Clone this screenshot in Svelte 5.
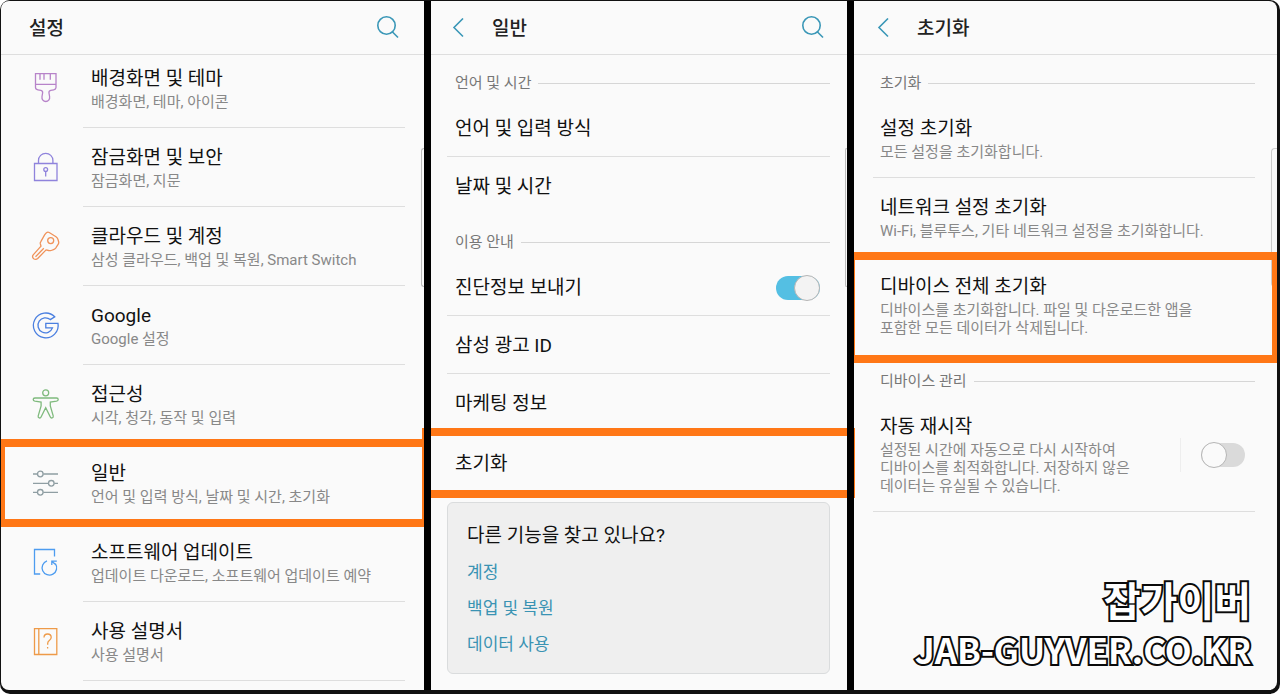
<script>
  const settings = [
    { icon: 'brush', color: '#b783c9', title: '배경화면 및 테마', note: '배경화면, 테마, 아이콘' },
    { icon: 'lock', color: '#8f83dc', title: '잠금화면 및 보안', note: '잠금화면, 지문' },
    { icon: 'key', color: '#f0935a', title: '클라우드 및 계정', note: '삼성 클라우드, 백업 및 복원, Smart Switch' },
    { icon: 'google', color: '#4a7fe0', title: 'Google', note: 'Google 설정' },
    { icon: 'person', color: '#7fba7d', title: '접근성', note: '시각, 청각, 동작 및 입력' },
    { icon: 'sliders', color: '#8f9ea3', title: '일반', note: '언어 및 입력 방식, 날짜 및 시간, 초기화', marked: true },
    { icon: 'update', color: '#4d9cf0', title: '소프트웨어 업데이트', note: '업데이트 다운로드, 소프트웨어 업데이트 예약' },
    { icon: 'manual', color: '#ee9a48', title: '사용 설명서', note: '사용 설명서' }
  ];
  const related = ['계정', '백업 및 복원', '데이터 사용'];

  let diagnostics = $state(true);
  let autoRestart = $state(false);
</script>

{#snippet search()}
  <button class="tool" aria-label="검색">
    <svg width="24" height="24" viewBox="0 0 24 24"><circle cx="10.5" cy="9.5" r="8.7" /><path d="M16 15.5l6 6" /></svg>
  </button>
{/snippet}

{#snippet back()}
  <button class="tool back" aria-label="뒤로">
    <svg width="14" height="20" viewBox="0 0 14 20"><path d="M12 .5L3 9.5l9 9" /></svg>
  </button>
{/snippet}

{#snippet glyph(name)}
  <svg width="32" height="32" viewBox="0 0 32 32" aria-hidden="true">
    {#if name === 'brush'}
      <path d="M5.5 .7H26v13.8c0 1.5-.8 2-2.3 2.3l-3 .6c-1.5.3-2 1.2-1.7 2.8l.6 3.3c.5 3-1.5 5-3.8 5s-4.3-2-3.8-5l.6-3.3c.3-1.6-.2-2.5-1.7-2.8l-3-.6c-1.5-.3-2.4-.8-2.4-2.3zM5.5 11.3H26M10 .7v6M14 .7v6M20.3 .7v6" />
    {:else if name === 'lock'}
      <path d="M4.5 11.5H27v17H4.5zM8.5 11.5V8.5a7.2 7.2 0 0 1 14.4 0v3M15.7 19.5v5" /><circle cx="15.7" cy="17.5" r="1.9" />
    {:else if name === 'key'}
      <path d="M16.2 1.9q1.5-1.2 3-.4l6.8 4.2q1.4 1 1.9 2.6l.8 2.7q.2 1.3-.6 2.4l-2.4 3.7q-.8 1-2.2 1.5l-2.3.9q-1.2.4-2.6 0l-2.5-.6-8.4 8.6q-1.8 1.7-4 .3-2-1.8-.5-4l7.8-8.6-.7-2.5q-.2-1 .4-1.9l3.9-6.9zM5.5 25.8l8.3-8.6" /><circle cx="20.7" cy="9.6" r="3" />
    {:else if name === 'google'}
      <path d="M24.7 6.8A12.4 12.4 0 1 0 28 13.3H15.8v4.6h6.7a7.5 7.5 0 1 1-2.2-8.3z" />
    {:else if name === 'person'}
      <circle cx="15.7" cy="3.8" r="3" /><path d="M5 9h21.5q1.7.1 1.7 1.5t-1.7 1.7l-6.2.8v4l2.9 9.8q.4 1.7-1 2.1-1.3.4-2-1.2l-4.5-8.9-4.5 8.9q-.7 1.6-2 1.2-1.4-.4-1-2.1l2.9-9.8v-4l-6.2-.8q-1.7-.3-1.7-1.7T5 9z" />
    {:else if name === 'sliders'}
      <path d="M3 6h4.3M13.3 6H28M3 15.3h15.3M24.3 15.3H28M3 24.3h4.3M13.3 24.3H28" /><circle cx="10.3" cy="6" r="2.8" /><circle cx="21.3" cy="15.3" r="2.8" /><circle cx="10.3" cy="24.3" r="2.8" />
    {:else if name === 'update'}
      <path d="M24.5 9.5v-7h-20V27h5.7M17 13.9a7.3 7.3 0 1 0 8.4 2.8M21.8 18v-3.8h5M22 14.4l3.6 3.2" />
    {:else}
      <path d="M4.5 2.7h22.3v25.8H4.5zM8.8 2.7v25.8M14 11.5q.1-3.5 3.6-3.5t3.6 3.2q0 2-1.9 3.4-1.6 1.2-1.6 3v1.2M17.6 21v1.6" />
    {/if}
  </svg>
{/snippet}

<main class="frame">
  <section class="panel first">
    <header><h1>설정</h1>{@render search()}</header>
    <nav>
      {#each settings as item}
        <a class="setting" class:marked={item.marked} href="#{item.icon}">
          <span class="icon" style="color: {item.color}">{@render glyph(item.icon)}</span>
          <span class="entry">
            <span class="title">{item.title}</span>
            <span class="note">{item.note}</span>
          </span>
        </a>
      {/each}
    </nav>
    <i class="edge"></i>
  </section>

  <section class="panel second">
    <header>{@render back()}<h1>일반</h1>{@render search()}</header>
    <div class="body">
      <h2>언어 및 시간</h2>
      <a class="row" href="#language">언어 및 입력 방식</a>
      <a class="row last" href="#date">날짜 및 시간</a>
      <h2>이용 안내</h2>
      <label class="row">진단정보 보내기<input type="checkbox" role="switch" bind:checked={diagnostics} /></label>
      <a class="row" href="#ad-id">삼성 광고 ID</a>
      <a class="row" href="#marketing">마케팅 정보</a>
      <a class="row last marked" href="#reset">초기화</a>
      <aside>
        <h3>다른 기능을 찾고 있나요?</h3>
        {#each related as name}
          <a href="#related">{name}</a>
        {/each}
      </aside>
    </div>
    <i class="edge"></i>
  </section>

  <section class="panel third">
    <header>{@render back()}<h1>초기화</h1></header>
    <div class="body">
      <h2>초기화</h2>
      <a class="detail" href="#settings-reset">
        <span class="title">설정 초기화</span>
        <span class="note">모든 설정을 초기화합니다.</span>
      </a>
      <a class="detail last" href="#network-reset">
        <span class="title">네트워크 설정 초기화</span>
        <span class="note">Wi-Fi, 블루투스, 기타 네트워크 설정을 초기화합니다.</span>
      </a>
      <a class="detail last marked" href="#factory-reset">
        <span class="title">디바이스 전체 초기화</span>
        <span class="note">디바이스를 초기화합니다. 파일 및 다운로드한 앱을<br />포함한 모든 데이터가 삭제됩니다.</span>
      </a>
      <h2>디바이스 관리</h2>
      <div class="detail split">
        <label for="restart">
          <span class="title">자동 재시작</span>
          <span class="note">설정된 시간에 자동으로 다시 시작하여<br />디바이스를 최적화합니다. 저장하지 않은<br />데이터는 유실될 수 있습니다.</span>
        </label>
        <span class="control"><input id="restart" type="checkbox" role="switch" bind:checked={autoRestart} /></span>
      </div>
    </div>
    <footer>
      <strong>잡가이버</strong>
      <strong class="site">JAB-GUYVER.CO.KR</strong>
    </footer>
    <i class="edge"></i>
  </section>
</main>

<style>
  :global(body) {
    margin: 0;
    background: #fff;
  }
  .frame, .frame * {
    box-sizing: border-box;
  }
  .frame {
    display: grid;
    grid-template-columns: 423fr 416fr 423fr;
    gap: 7px;
    min-height: 100vh;
    padding: 1px 3px 4px 1px;
    border-radius: 10px;
    overflow: hidden;
    background: #111;
    font-family: Roboto, 'Noto Sans CJK KR', sans-serif;
    color: #111;
  }
  .panel {
    position: relative;
    display: flex;
    flex-direction: column;
    min-width: 0;
    background: #fafafa;
  }
  .first {
    border-radius: 8px 0 0 8px;
  }
  .third {
    border-radius: 0 8px 8px 0;
  }
  /* the dark seam hides the part of a marker that runs past its panel */
  .second::before, .third::before {
    content: '';
    position: absolute;
    z-index: 3;
    top: 0;
    bottom: 0;
    left: -7px;
    width: 7px;
    background: #000;
  }
  a {
    color: inherit;
    text-decoration: none;
  }
  header {
    display: flex;
    align-items: center;
    height: 54px;
    padding: 0 22px 0 20px;
    border-bottom: 1px solid #dedede;
  }
  .first header {
    padding: 0 24px 0 28px;
  }
  .third header {
    padding-left: 22px;
  }
  h1 {
    flex: 1;
    margin: 0;
    padding-top: 2px;
    font-size: 19px;
    line-height: 24px;
    font-weight: 500;
    color: #222;
  }
  .tool {
    display: flex;
    padding: 0;
    border: 0;
    background: none;
    color: #3a97b7;
  }
  .back {
    margin-right: 27px;
  }
  svg {
    display: block;
    fill: none;
    stroke: currentColor;
    stroke-width: 1.3;
  }
  .tool svg {
    stroke-width: 1.6;
  }
  .title {
    display: block;
    font-size: 19px;
    line-height: 24px;
  }
  .note {
    display: block;
    margin-top: 2px;
    font-size: 15px;
    line-height: 18px;
    font-weight: 400;
    color: #888;
  }
  .setting {
    position: relative;
    display: flex;
    padding-right: 19px;
  }
  .icon {
    padding: 24px 20px 0 29px;
  }
  .entry {
    flex: 1;
    height: 79px;
    margin-left: 1px;
    padding: 18px 0 0 8px;
    border-bottom: 1px solid #dedede;
    white-space: nowrap;
  }
  .setting:first-child .entry {
    height: 73px;
    padding-top: 12px;
  }
  .setting:first-child .icon {
    padding-top: 18px;
  }
  .body {
    padding: 0 17px 0 16px;
  }
  .third .body {
    padding: 0 22px 0 19px;
  }
  h2 {
    display: flex;
    align-items: center;
    gap: 7px;
    height: 44px;
    margin: 0;
    padding: 12px 0 0 8px;
    font-size: 15px;
    line-height: 22px;
    font-weight: 400;
    color: #777;
  }
  .third h2 {
    padding-left: 7px;
  }
  h2::after {
    content: '';
    flex: 1;
    height: 1px;
    background: #d6d6d6;
  }
  .row {
    position: relative;
    display: flex;
    align-items: center;
    justify-content: space-between;
    height: 58px;
    padding: 2px 10px 0 8px;
    border-bottom: 1px solid #dedede;
    font-size: 19px;
    line-height: 24px;
  }
  .row.last {
    height: 57px;
    border: 0;
  }
  .row.marked {
    height: 62px;
  }
  .detail {
    position: relative;
    display: block;
    padding: 18px 0 16px 7px;
    border-bottom: 1px solid #dedede;
  }
  .detail.last {
    border-color: transparent;
  }
  .detail.marked {
    border: 0;
  }
  .split {
    display: flex;
    align-items: center;
    justify-content: space-between;
    padding-right: 10px;
  }
  .control {
    display: flex;
    align-items: center;
    height: 34px;
    padding-left: 20px;
    border-left: 1px solid #eee;
  }
  input {
    appearance: none;
    position: relative;
    width: 44px;
    height: 24px;
    margin: 0;
    border-radius: 12px;
    background: #dadada;
  }
  input::before {
    content: '';
    position: absolute;
    top: -1px;
    left: 0;
    width: 26px;
    height: 26px;
    box-sizing: border-box;
    border: 1px solid #b5b5b5;
    border-radius: 50%;
    background: #fafafa;
  }
  input:checked {
    background: #54bfe3;
  }
  input:checked::before {
    left: 18px;
    background: #f3f3f3;
  }
  .marked::after {
    content: '';
    position: absolute;
    z-index: 2;
    border: 8px solid #ff7716;
    pointer-events: none;
  }
  .setting.marked::after {
    inset: -5px -6px -4px 0;
    border-left-width: 4px;
  }
  .row.marked::after {
    inset: -4px -25px -4px -25px;
  }
  .detail.marked::after {
    inset: -5px -22px -10px -26px;
    border-right-width: 5px;
  }
  aside {
    display: flex;
    flex-direction: column;
    margin-top: 8px;
    padding: 20px 19px 11px;
    border: 1px solid #dadcdd;
    border-radius: 6px;
    background: #efefef;
  }
  h3 {
    margin: 0 0 5px;
    font-size: 19px;
    line-height: 26px;
    font-weight: 400;
  }
  aside a {
    font-size: 17px;
    line-height: 36px;
    color: #3a93b3;
  }
  .edge {
    position: absolute;
    z-index: 1;
    top: 147px;
    right: 0;
    width: 3px;
    height: 139px;
    border: 1px solid #bbb;
    border-right: 0;
    border-radius: 4px 0 0 4px;
  }
  .second .edge {
    width: 2px;
  }
  .third .edge {
    width: 6px;
    border-color: #ccc;
  }
  footer {
    display: flex;
    flex-direction: column;
    align-items: flex-end;
    margin-top: auto;
    padding: 0 26px 16px 0;
  }
  strong {
    font: 700 40px/50px 'Noto Sans CJK KR', sans-serif;
    color: #fff;
    -webkit-text-stroke: 4px #0a0a0a;
    stroke-linejoin: round;
    paint-order: stroke fill;
  }
  .site {
    font-size: 35px;
  }
</style>
